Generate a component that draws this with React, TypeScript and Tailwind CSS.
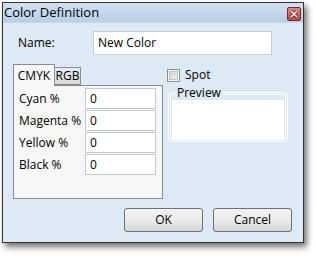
import React from "react";

const font = { fontFamily: '"Open Sans", "Noto Sans", sans-serif' };

function Field({ label }: { label: string }) {
  return (
    <div className="flex items-center h-[21px]">
      <span className="w-[70px] pl-[4px] text-[12px] text-black">{label}</span>
      <div className="w-[71px] h-[21px] bg-white border border-[#c5c8ce] flex items-center pl-[4px] text-[12px] text-black">
        0
      </div>
    </div>
  );
}

export default function App() {
  return (
    <div className="w-[316px] h-[256px] bg-white pt-[2px] pl-[2px]" style={font}>
      <div className="w-[302px] h-[241px] border border-[#333] flex flex-col shadow-[3px_4px_6px_rgba(0,0,0,0.55)]">
        <div className="h-[19px] bg-gradient-to-b from-[#d3e1f1] to-[#b8cee8] flex items-center justify-between pl-[1px] pr-[2px]">
          <span className="text-[13px] text-black leading-none">Color Definition</span>
          <div className="w-[14px] h-[14px] mt-[2px] rounded-[2px] border border-[#6d2f2f] bg-gradient-to-b from-[#e08a7e] to-[#c4433a] flex items-center justify-center">
            <svg width="8" height="8" viewBox="0 0 8 8">
              <path d="M1 1 L7 7 M7 1 L1 7" stroke="#4a1a1a" strokeWidth="3" />
              <path d="M1 1 L7 7 M7 1 L1 7" stroke="#fff" strokeWidth="1.6" />
            </svg>
          </div>
        </div>
        <div className="flex-1 bg-[#dde9f4] border-t border-[#c9d9ec] flex flex-col">
          <div className="flex items-center mt-[8px]">
            <span className="w-[90px] pl-[15px] text-[12px] text-black">Name:</span>
            <div className="w-[179px] h-[24px] bg-white border border-[#c5ced8] flex items-center pl-[4px] text-[12px] text-black">
              New Color
            </div>
          </div>
          <div className="flex mt-[8px]">
            <div className="ml-[10px] w-[150px] flex flex-col">
              <div className="flex items-end h-[22px]">
                <div className="h-[22px] w-[42px] bg-[#f7f7f7] border border-b-0 border-[#898c95] flex items-center justify-center text-[12px] text-black relative top-[1px]">
                  CMYK
                </div>
                <div className="h-[18px] w-[26px] bg-gradient-to-b from-[#ececec] to-[#d9d9d9] border border-l-0 border-[#898c95] flex items-center justify-center text-[12px] text-black">
                  RGB
                </div>
              </div>
              <div className="h-[114px] bg-[#f7f7f7] border border-[#898c95] flex flex-col gap-[1px] pt-[2px] pl-[1px]">
                <Field label="Cyan %" />
                <Field label="Magenta %" />
                <Field label="Yellow %" />
                <Field label="Black %" />
              </div>
            </div>
            <div className="ml-[4px] flex flex-col">
              <div className="flex items-center mt-[3px] gap-[5px]">
                <div className="w-[13px] h-[13px] border border-[#8f8f8f] bg-[#f4f4f4] p-[1px]">
                  <div className="w-full h-full border border-[#c2c2c2] bg-gradient-to-br from-[#d2d2d2] to-[#f2f2f2]" />
                </div>
                <span className="text-[12px] text-black">Spot</span>
              </div>
              <fieldset className="mt-[2px] ml-[1px] w-[120px] h-[56px] border-[3px] border-double border-white rounded-[3px] px-[1px] pb-[1px]">
                <legend className="ml-[4px] px-[1px] text-[12px] text-black leading-[14px]">Preview</legend>
                <div className="w-full h-[39px] bg-white" />
              </fieldset>
            </div>
          </div>
          <div className="flex justify-end gap-[10px] mt-[9px] pr-[11px]">
            <button className="w-[79px] h-[24px] rounded-[3px] border border-[#707070] bg-gradient-to-b from-[#f2f2f2] via-[#ebebeb] to-[#d6d6d6] text-[12px] text-black">
              OK
            </button>
            <button className="w-[79px] h-[24px] rounded-[3px] border border-[#707070] bg-gradient-to-b from-[#f2f2f2] via-[#ebebeb] to-[#d6d6d6] text-[12px] text-black">
              Cancel
            </button>
          </div>
        </div>
      </div>
    </div>
  );
}
